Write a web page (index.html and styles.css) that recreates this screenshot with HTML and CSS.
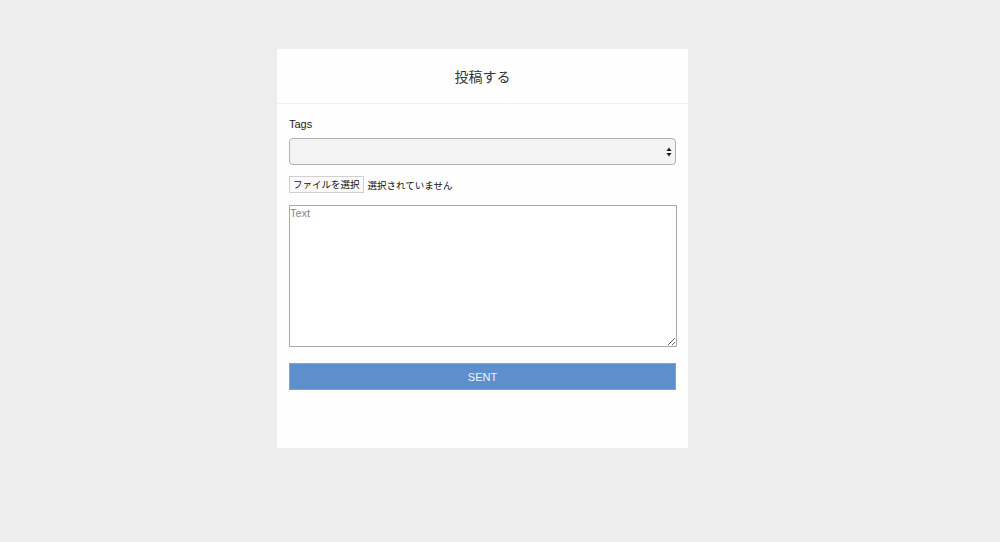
FILE: index.html
```html
<!DOCTYPE html>
<html lang="ja">
<head>
<meta charset="utf-8">
<title>投稿する</title>
<link rel="stylesheet" href="styles.css">
</head>
<body>
<div class="page">
  <div class="card">
    <div class="card-header">投稿する</div>
    <form class="card-body">
      <label class="label">Tags</label>
      <div class="select">
        <svg class="arrows" width="6" height="10" viewBox="0 0 6 10"><path d="M3 0.5 L5.6 4 H0.4 Z M3 9.5 L5.6 6 H0.4 Z" fill="#222"/></svg>
      </div>
      <div class="file">
        <span class="file-btn">ファイルを選択</span>
        <span class="file-text">選択されていません</span>
      </div>
      <textarea class="text" placeholder="Text"></textarea>
      <button type="button" class="sent">SENT</button>
    </form>
  </div>
</div>
</body>
</html>
```
FILE: styles.css
```css
html, body {
  margin: 0;
  padding: 0;
  background: #ededed;
  font-family: "Liberation Sans", "Noto Sans CJK JP", sans-serif;
  color: #222;
}
.page {
  padding: 49px 0 0 277px;
}
.card {
  width: 411px;
  height: 399px;
  background: #fefefe;
  display: flex;
  flex-direction: column;
}
.card-header {
  height: 54px;
  border-bottom: 1px solid #f0f0f0;
  display: flex;
  align-items: center;
  justify-content: center;
  font-family: "Noto Sans CJK JP", sans-serif;
  font-size: 14px;
  color: #333;
}
.card-body {
  display: flex;
  flex-direction: column;
  padding: 13px 12px 0 12px;
  margin: 0;
}
.label {
  font-size: 11px;
  line-height: 14px;
  color: #222;
}
.select {
  margin-top: 7px;
  height: 27px;
  width: 387px;
  box-sizing: border-box;
  border: 1px solid #b0b0b0;
  border-radius: 4px;
  background: #f4f4f4;
  display: flex;
  align-items: center;
  justify-content: flex-end;
  padding-right: 3px;
}
.arrows { display: block; }
.file {
  margin-top: 11px;
  display: flex;
  align-items: center;
  gap: 4px;
  font-family: "Noto Sans CJK JP", sans-serif;
  font-size: 9.5px;
  color: #111;
}
.file-btn {
  border: 1px solid #d0d0d0;
  background: #fafafa;
  padding: 0 3px;
  height: 15px;
  line-height: 15px;
}
.text {
  margin-top: 12px;
  width: 388px;
  height: 142px;
  box-sizing: border-box;
  border: 1px solid #a9a9a9;
  padding: 1px 0 0 0;
  font-family: "Liberation Sans", sans-serif;
  font-size: 11px;
  background: #fff;
  resize: vertical;
}
.text::placeholder { color: #8a8a8a; }
.sent {
  margin-top: 16px;
  width: 387px;
  height: 27px;
  background: #5d8fcc;
  border: 1px solid #7ea5d8;
  color: #eef4fb;
  font-family: "Liberation Sans", sans-serif;
  font-size: 11px;
  padding: 0;
}
```
